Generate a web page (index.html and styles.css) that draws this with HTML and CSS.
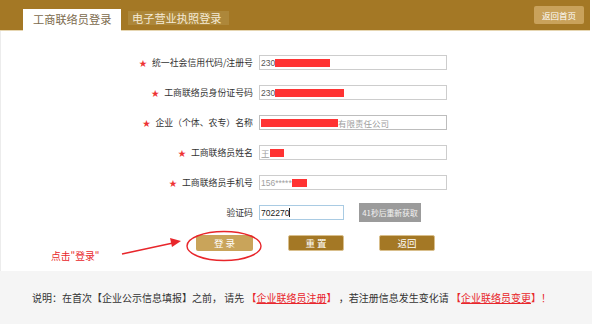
FILE: index.html
```html
<!DOCTYPE html>
<html lang="zh">
<head>
<meta charset="utf-8">
<title>工商联络员登录</title>
<link rel="stylesheet" href="styles.css">
</head>
<body>
<div class="page">
  <div class="topbar">
    <div class="tabs">
      <div class="tab tab-active">工商联络员登录</div>
      <div class="tab tab-other">电子营业执照登录</div>
    </div>
    <div class="home-btn">返回首页</div>
  </div>

  <div class="content">
    <div class="form">
      <div class="row">
        <div class="label"><span class="star">★</span>统一社会信用代码/注册号</div>
        <div class="field"><span class="val">230</span><span class="redact r1"></span></div>
      </div>
      <div class="row">
        <div class="label"><span class="star">★</span>工商联络员身份证号码</div>
        <div class="field"><span class="val">230</span><span class="redact r2"></span></div>
      </div>
      <div class="row">
        <div class="label"><span class="star">★</span>企业（个体、农专）名称</div>
        <div class="field field-gray"><span class="redact r3"></span><span class="val muted">有限责任公司</span></div>
      </div>
      <div class="row">
        <div class="label"><span class="star">★</span>工商联络员姓名</div>
        <div class="field"><span class="val muted">王</span><span class="redact r4"></span></div>
      </div>
      <div class="row">
        <div class="label"><span class="star">★</span>工商联络员手机号</div>
        <div class="field"><span class="val muted">156*****</span><span class="redact r5"></span></div>
      </div>
      <div class="row">
        <div class="label">验证码</div>
        <div class="field field-code"><span class="val dark">702270</span><span class="caret"></span></div>
        <div class="code-btn">41秒后重新获取</div>
      </div>
      <div class="actions">
        <div class="btn btn-login">登 录</div>
        <div class="btn btn-dark">重 置</div>
        <div class="btn btn-dark">返回</div>
      </div>
    </div>

    <div class="hint">点击"登录"</div>
    <svg class="annot" width="592" height="300" viewBox="0 0 592 300">
      <ellipse cx="223" cy="215" rx="37" ry="14.5" fill="none" stroke="#e8262b" stroke-width="1.4"/>
      <line x1="121" y1="223" x2="172" y2="212" stroke="#e8262b" stroke-width="1.6"/>
      <polygon points="180,210 169,207 171,216" fill="#e8262b"/>
    </svg>
  </div>

  <div class="footer">
    <p class="note">说明：在首次【企业公示信息填报】之前， 请先 <span class="red">【<u>企业联络员注册</u>】</span> ，若注册信息发生变化请 <span class="red">【<u>企业联络员变更</u>】！</span></p>
  </div>
</div>
</body>
</html>
```

FILE: styles.css
```css
* { box-sizing: border-box; }
html, body { margin: 0; padding: 0; background: #ffffff; }
body {
  font-family: "Noto Sans CJK SC", "Noto Sans", sans-serif;
  color: #333;
}
.page { width: 592px; }

.topbar {
  width: 590px;
  height: 31px;
  background: #a47825;
  border-bottom: 1px solid #e6d6b2;
  display: flex;
  justify-content: space-between;
  align-items: flex-start;
}
.tabs {
  display: flex;
  align-items: flex-start;
  padding-left: 23px;
  height: 30px;
}
.tab {
  font-size: 11.2px;
  line-height: 14px;
  white-space: nowrap;
}
.tab-active {
  margin-top: 9px;
  height: 22px;
  width: 98px;
  background: #ffffff;
  color: #7c6a4c;
  padding: 3px 0 0 10px;
}
.tab-other {
  margin-top: 11px;
  margin-left: 7px;
  height: 14px;
  width: 101px;
  background: #ad873a;
  color: #f4ead6;
  padding: 0 0 0 4px;
}
.home-btn {
  margin: 6px 6px 0 0;
  width: 50px;
  height: 18px;
  background: #c9a25b;
  border-radius: 2px;
  color: #fff;
  font-size: 8.5px;
  line-height: 18px;
  text-align: center;
}

.content {
  position: relative;
  height: 240px;
  background: #fff;
  border-left: 1px solid #ececec;
}
.form { padding-top: 24px; }
.row {
  display: flex;
  align-items: center;
  height: 15px;
  margin-bottom: 15px;
}
.label {
  width: 252px;
  display: flex;
  justify-content: flex-end;
  align-items: center;
  font-size: 8.9px;
  line-height: 15px;
  color: #333;
  white-space: nowrap;
}
.star {
  color: #e33;
  font-size: 8px;
  margin-right: 5px;
}
.field {
  margin-left: 6px;
  width: 188px;
  height: 15px;
  border: 1px solid #cdcdcd;
  background: #fff;
  display: flex;
  align-items: center;
  padding-left: 1px;
  font-family: "Liberation Sans", "Noto Sans CJK SC", sans-serif;
  font-size: 8.5px;
  overflow: hidden;
}
.field-gray { border-color: #bdbdbd; }
.val { color: #555; white-space: nowrap; }
.val.muted { color: #a0a0a0; }
.val.dark { color: #222; }
.redact { display: inline-block; height: 8px; background: #ff3333; }
.r1 { width: 55px; }
.r2 { width: 69px; }
.r3 { width: 77px; }
.r4 { width: 14px; }
.r5 { width: 15px; }
.field-code { width: 85px; border-color: #a9cbe3; }
.caret { display: inline-block; width: 1px; height: 9px; background: #222; }
.code-btn {
  margin-left: 15px;
  width: 62px;
  height: 19px;
  background: #9b9b9b;
  color: #f2f2f2;
  font-size: 7.8px;
  line-height: 19px;
  text-align: center;
  white-space: nowrap;
}

.actions {
  display: flex;
  padding-left: 195px;
  gap: 35px;
  margin-top: 2px;
}
.btn {
  width: 56px;
  height: 16px;
  border-radius: 2px;
  color: #fff;
  font-size: 9.5px;
  line-height: 16px;
  text-align: center;
}
.btn-login { background: #c9a45a; width: 57px; }
.btn-dark { background: #a47825; border: 1px solid #d9bf8c; line-height: 14px; }

.hint {
  position: absolute;
  left: 50px;
  top: 219px;
  color: #e8262b;
  font-size: 9.8px;
  line-height: 12px;
  white-space: nowrap;
}
.annot { position: absolute; left: 0; top: 30px; top: 0; }

.footer {
  width: 592px;
  height: 53px;
  background: #f5f5f5;
  display: flex;
  align-items: center;
  padding-left: 32px;
}
.note {
  margin: 0;
  font-size: 10px;
  color: #333;
  white-space: nowrap;
  letter-spacing: 0;
}
.red { color: #e8262b; }
.red u { text-decoration: underline; }
```
